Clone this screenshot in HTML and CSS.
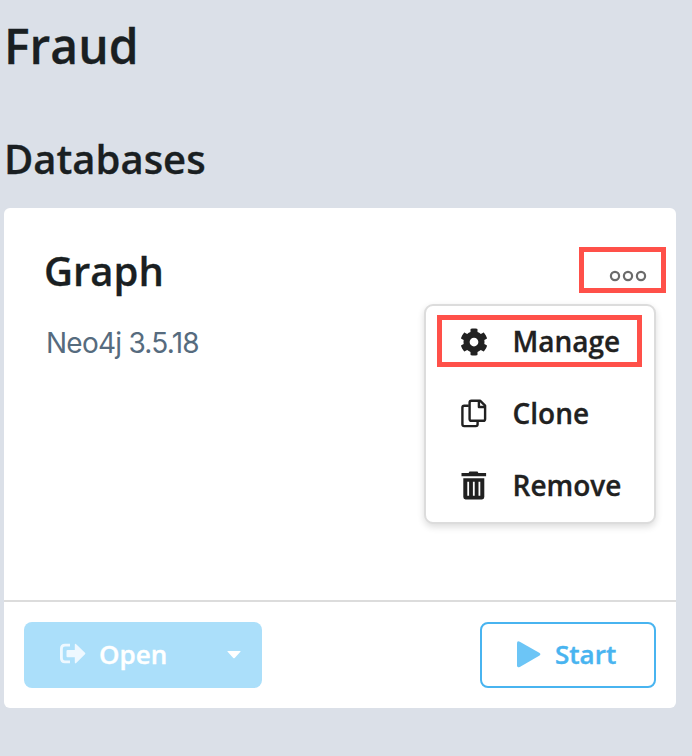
FILE: index.html
```html
<!DOCTYPE html>
<html lang="en">
<head>
<meta charset="utf-8">
<title>Fraud</title>
<link rel="stylesheet" href="styles.css">
</head>
<body>
<main class="project">
  <h1 class="project-title">Fraud</h1>
  <h2 class="section-title">Databases</h2>
  <article class="card">
    <div class="card-body">
      <div class="card-head">
        <h3 class="card-title">Graph</h3>
        <button class="more highlight" aria-label="More options">
          <svg width="38" height="12" viewBox="0 0 38 12" fill="none" stroke="#6b6b6b" stroke-width="2.2"><circle cx="6" cy="6" r="4.1"/><circle cx="19" cy="6" r="4.1"/><circle cx="32" cy="6" r="4.1"/></svg>
        </button>
      </div>
      <p class="version">Neo4j 3.5.18</p>
      <div class="menu">
        <div class="menu-item">
          <svg class="menu-icon" viewBox="0 0 512 512"><path fill="currentColor" d="M487.4 315.7l-42.6-24.6c4.3-23.2 4.3-47 0-70.2l42.6-24.6c4.9-2.8 7.1-8.6 5.5-14-11.1-35.6-30-67.8-54.7-94.6-3.8-4.1-10-5.1-14.8-2.3L380.8 110c-17.9-15.4-38.5-27.3-60.8-35.1V25.8c0-5.6-3.9-10.5-9.4-11.7-36.7-8.2-74.3-7.8-109.2 0-5.5 1.2-9.4 6.1-9.4 11.7V75c-22.2 7.9-42.8 19.8-60.8 35.1L88.7 85.5c-4.9-2.8-11-1.9-14.8 2.3-24.7 26.7-43.6 58.9-54.7 94.6-1.7 5.4.6 11.2 5.5 14L67.3 221c-4.3 23.2-4.3 47 0 70.2l-42.6 24.6c-4.9 2.8-7.1 8.6-5.5 14 11.1 35.6 30 67.8 54.7 94.6 3.8 4.1 10 5.1 14.8 2.3l42.6-24.6c17.9 15.4 38.5 27.3 60.8 35.1v49.2c0 5.6 3.9 10.5 9.4 11.7 36.7 8.2 74.3 7.8 109.2 0 5.5-1.2 9.4-6.1 9.4-11.7v-49.2c22.2-7.9 42.8-19.8 60.8-35.1l42.6 24.6c4.9 2.8 11 1.9 14.8-2.3 24.7-26.7 43.6-58.9 54.7-94.6 1.5-5.5-.7-11.3-5.6-14.1zM256 336c-44.1 0-80-35.9-80-80s35.9-80 80-80 80 35.9 80 80-35.9 80-80 80z"/></svg>
          <span class="menu-label">Manage</span>
        </div>
        <div class="menu-item">
          <svg class="menu-icon" viewBox="0 0 28 28" fill="none" stroke="currentColor" stroke-width="2.4" stroke-linejoin="round"><path d="M8.8 5.8H4.2Q2.4 5.8 2.4 7.6V24.3Q2.4 26.1 4.2 26.1H15.8Q17.6 26.1 17.6 24.3V20.8"/><path d="M11.4 .8H20.3L25.1 5.6V18.9Q25.1 20.8 23.3 20.8H11.4Q9.6 20.8 9.6 18.9V2.6Q9.6 .8 11.4 .8Z"/><path d="M18.9 1V7H25"/></svg>
          <span class="menu-label">Clone</span>
        </div>
        <div class="menu-item">
          <svg class="menu-icon" viewBox="0 0 28 28" fill="currentColor"><path d="M1.5 1.1H8.6L9.5-.6H17.5L18.4 1.1H26.1V4.2H1.5Z"/><path fill-rule="evenodd" d="M3.3 6.2H24.3V25.1Q24.3 27.4 22 27.4H5.6Q3.3 27.4 3.3 25.1ZM7.3 9.7V23.7H9.1V9.7ZM12.9 9.7V23.7H14.7V9.7ZM18.5 9.7V23.7H20.3V9.7Z"/></svg>
          <span class="menu-label">Remove</span>
        </div>
      </div>
      <div class="manage-frame"></div>
    </div>
    <footer class="card-foot">
      <button class="btn open">
        <svg width="28" height="22" viewBox="0 0 28 22"><path d="M11 2.2H6Q2.4 2.2 2.4 5.8V15.3Q2.4 18.9 6 18.9H11" fill="none" stroke="#eef8ff" stroke-width="2.8"/><path d="M8.5 7H15.8V1.8Q15.8 0 17.2 1.3L26 9.7Q26.8 10.5 26 11.3L17.2 19.9Q15.8 21.1 15.8 19.3V14.2H8.5Q7.5 14.2 7.5 13.2V8Q7.5 7 8.5 7Z" fill="#eef8ff"/></svg>
        <span class="open-label">Open</span>
        <svg class="caret" width="14" height="8" viewBox="0 0 14 8"><path fill="#fff" d="M.8 0H13.2Q14 0 13.4 .8L7.7 7Q7 7.7 6.3 7L.6 .8Q0 0 .8 0Z"/></svg>
      </button>
      <button class="btn start">
        <svg width="24" height="27" viewBox="0 0 24 27"><path fill="#6cc5f6" d="M0 2.2Q0-.6 2.8.8L22.2 11.7Q24.6 13.2 22.2 14.8L2.8 25.9Q0 27.2 0 24.5Z"/></svg>
        <span>Start</span>
      </button>
    </footer>
  </article>
</main>
</body>
</html>
```
FILE: styles.css
```css
* { box-sizing: border-box; }
body {
  margin: 0;
  background: #dbe0e8;
  color: #1a1f22;
  font-family: "Open Sans", sans-serif;
  font-weight: 600;
  -webkit-text-stroke: .3px currentColor;
}
h1, h2, h3, p { margin: 0; font-weight: 600; }
button { font: inherit; margin: 0; padding: 0; }
.project { height: 756px; padding: 13px 16px 0 4px; }
.project-title { font-size: 48px; line-height: 66px; }
.section-title { margin-top: 52px; font-size: 40px; line-height: 56px; }
.card {
  display: flex;
  flex-direction: column;
  height: 500px;
  margin-top: 21px;
  background: #fff;
  border-radius: 6px;
}
.card-body { position: relative; flex: 1; padding: 39px 10px 0 40px; }
.card-head { display: flex; justify-content: space-between; align-items: flex-start; }
.card-title { font-size: 40px; line-height: 48px; }
.more {
  display: flex;
  align-items: center;
  justify-content: flex-end;
  width: 87px;
  height: 46px;
  padding: 11px 14px 0 0;
  background: none;
}
.highlight, .manage-frame { border: 5px solid #ff5049; }
.version {
  margin: 28px 0 0 2px;
  color: #566b7e;
  font: 400 28px/40px Inter, sans-serif;
  letter-spacing: -.75px;
  -webkit-text-stroke-width: 0;
}
.menu {
  position: absolute;
  top: 96px;
  left: 420px;
  width: 232px;
  height: 220px;
  border: 2px solid #dcdcdc;
  border-radius: 9px;
  background: #fff;
  color: #212121;
  box-shadow: 0 3px 7px rgba(0, 0, 0, .14);
}
.menu-item {
  display: flex;
  align-items: center;
  gap: 24.5px;
  height: 72px;
  padding-left: 34px;
  font-size: 28px;
  line-height: 40px;
}
.menu-label { padding-bottom: 2px; }
.menu-icon { width: 28px; height: 28px; overflow: visible; }
.manage-frame {
  position: absolute;
  top: 107px;
  left: 433px;
  width: 205px;
  height: 52px;
}
.card-foot {
  display: flex;
  justify-content: space-between;
  height: 108px;
  padding: 20px;
  border-top: 2px solid #dcdcdc;
}
.btn {
  display: flex;
  align-items: center;
  height: 66px;
  padding-bottom: 2px;
  border-radius: 8px;
  font-size: 26px;
  line-height: 36px;
  -webkit-text-stroke-width: .4px;
}
.open { width: 238px; padding-left: 35px; border: 0; background: #abdffa; color: #fff; }
.open-label { margin-left: 12px; }
.open .caret { margin: 2px 0 0 60px; }
.start {
  gap: 14px;
  width: 176px;
  padding-left: 35px;
  border: 2px solid #48b4f0;
  background: #fff;
  color: #48b4f0;
}
```
